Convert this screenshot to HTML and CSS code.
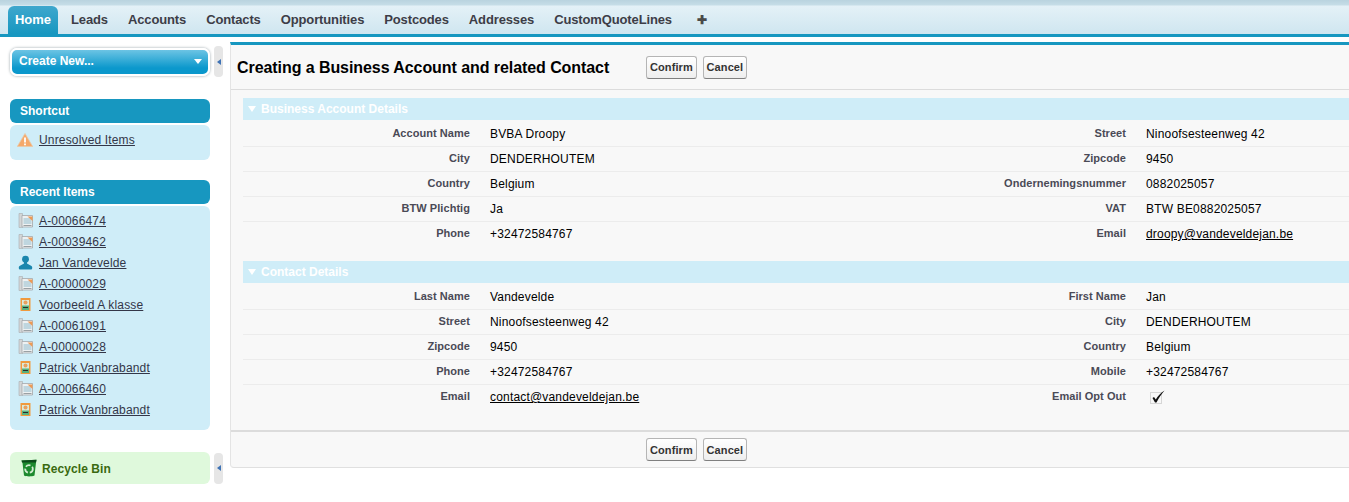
FILE: index.html
```html
<!DOCTYPE html>
<html lang="en">
<head>
<meta charset="utf-8">
<title>Creating a Business Account</title>
<link rel="stylesheet" href="styles.css">
</head>
<body>
<svg class="defs" width="0" height="0" aria-hidden="true">
  <symbol id="doc" viewBox="0 0 15 15">
    <path d="M1 .5h3.500v14H1z" fill="#d3d6d7" stroke="#a9adaf" stroke-width=".6"/>
    <path d="M4 2.500h10.500v11.500H4z" fill="#eef1f2" stroke="#a3a7a9" stroke-width=".8"/>
    <path d="M5.500 5h8v6h-8z" fill="#bfd6df"/>
    <path d="M9.500 3.500h5V8z" fill="#ee9a55"/>
    <path d="M5.500 12.500h8" stroke="#9aa0a3"/>
  </symbol>
  <symbol id="card" viewBox="0 0 15 15">
    <path d="M2.500 1h10v13h-10z" fill="#f09a3e"/>
    <path d="M4 3h7v10H4z" fill="#dcead9"/>
    <circle cx="7.500" cy="5.500" r="2" fill="#e7a05f"/>
    <path d="M4 8.500h7V13H4z" fill="#57b27f"/>
    <path d="M5 10.500h5" stroke="#2c2c2c" stroke-width="1"/>
  </symbol>
</svg>

<nav class="tabs">
  <a class="tab tab-active">Home</a>
  <a class="tab">Leads</a>
  <a class="tab">Accounts</a>
  <a class="tab">Contacts</a>
  <a class="tab">Opportunities</a>
  <a class="tab">Postcodes</a>
  <a class="tab">Addresses</a>
  <a class="tab">CustomQuoteLines</a>
  <a class="tab tab-plus">✚</a>
</nav>

<div class="page">
  <aside class="sidebar">
    <div class="side-row create-row">
      <div class="create">
        <span class="create-label">Create New...</span>
        <span class="create-arrow"></span>
      </div>
      <div class="handle"><span class="handle-arrow"></span></div>
    </div>

    <section class="module shortcut">
      <h2 class="module-head">Shortcut</h2>
      <div class="module-body">
        <div class="item item-warn">
          <svg class="icon warn" viewBox="0 0 16 14"><path d="M8 .5 15.700 13.500H.3z" fill="#f5a96b" stroke="#e8c9a8" stroke-width=".8"/><path d="M8 4.500v5" stroke="#fff" stroke-width="1.800"/><path d="M8 10.500v1.800" stroke="#fff" stroke-width="1.800"/></svg>
          <a class="link">Unresolved Items</a>
        </div>
      </div>
    </section>

    <section class="module recent">
      <h2 class="module-head">Recent Items</h2>
      <div class="module-body">
        <div class="item"><svg class="icon"><use href="#doc"/></svg><a class="link">A-00066474</a></div>
        <div class="item"><svg class="icon"><use href="#doc"/></svg><a class="link">A-00039462</a></div>
        <div class="item"><svg class="icon" viewBox="0 0 15 15"><circle cx="7.500" cy="4.200" r="3.400" fill="#1a86ad"/><path d="M6 7h3v1.500l4.500 2.500c1 .7 1 3 0 3.500h-12c-1-.5-1-2.800 0-3.500L6 8.500z" fill="#1a86ad"/></svg><a class="link">Jan Vandevelde</a></div>
        <div class="item"><svg class="icon"><use href="#doc"/></svg><a class="link">A-00000029</a></div>
        <div class="item"><svg class="icon"><use href="#card"/></svg><a class="link">Voorbeeld A klasse</a></div>
        <div class="item"><svg class="icon"><use href="#doc"/></svg><a class="link">A-00061091</a></div>
        <div class="item"><svg class="icon"><use href="#doc"/></svg><a class="link">A-00000028</a></div>
        <div class="item"><svg class="icon"><use href="#card"/></svg><a class="link">Patrick Vanbrabandt</a></div>
        <div class="item"><svg class="icon"><use href="#doc"/></svg><a class="link">A-00066460</a></div>
        <div class="item"><svg class="icon"><use href="#card"/></svg><a class="link">Patrick Vanbrabandt</a></div>
      </div>
    </section>

    <div class="side-row bin-row">
      <div class="bin">
        <svg class="bin-icon" viewBox="0 0 16 18"><path d="M.5 1.500 15.500.8l-.5 3-1.500 12.700c-3 1.200-8 1.200-10.500 0L1.500 4z" fill="#1c8a2e"/><path d="M.5 1.500 15.500.8 15 3.500H1z" fill="#0c4a1a"/><circle cx="8" cy="10" r="3.800" fill="none" stroke="#d5ecd3" stroke-width="1.800" stroke-dasharray="5 2"/></svg>
        <span class="bin-label">Recycle Bin</span>
      </div>
      <div class="handle"><span class="handle-arrow"></span></div>
    </div>
  </aside>

  <main class="panel">
    <header class="panel-head">
      <h1 class="title">Creating a Business Account and related Contact</h1>
      <div class="buttons">
        <button class="btn">Confirm</button>
        <button class="btn">Cancel</button>
      </div>
    </header>

    <div class="panel-body">
      <section class="section">
        <h3 class="section-head"><span class="tri"></span>Business Account Details</h3>
        <div class="fields">
          <div class="row"><div class="lbl">Account Name</div><div class="val">BVBA Droopy</div><div class="lbl">Street</div><div class="val">Ninoofsesteenweg 42</div></div>
          <div class="row"><div class="lbl">City</div><div class="val">DENDERHOUTEM</div><div class="lbl">Zipcode</div><div class="val">9450</div></div>
          <div class="row"><div class="lbl">Country</div><div class="val">Belgium</div><div class="lbl">Ondernemingsnummer</div><div class="val">0882025057</div></div>
          <div class="row"><div class="lbl">BTW Plichtig</div><div class="val">Ja</div><div class="lbl">VAT</div><div class="val">BTW BE0882025057</div></div>
          <div class="row"><div class="lbl">Phone</div><div class="val">+32472584767</div><div class="lbl">Email</div><div class="val"><a class="mail">droopy@vandeveldejan.be</a></div></div>
        </div>
      </section>

      <section class="section">
        <h3 class="section-head"><span class="tri"></span>Contact Details</h3>
        <div class="fields">
          <div class="row"><div class="lbl">Last Name</div><div class="val">Vandevelde</div><div class="lbl">First Name</div><div class="val">Jan</div></div>
          <div class="row"><div class="lbl">Street</div><div class="val">Ninoofsesteenweg 42</div><div class="lbl">City</div><div class="val">DENDERHOUTEM</div></div>
          <div class="row"><div class="lbl">Zipcode</div><div class="val">9450</div><div class="lbl">Country</div><div class="val">Belgium</div></div>
          <div class="row"><div class="lbl">Phone</div><div class="val">+32472584767</div><div class="lbl">Mobile</div><div class="val">+32472584767</div></div>
          <div class="row"><div class="lbl">Email</div><div class="val"><a class="mail">contact@vandeveldejan.be</a></div><div class="lbl">Email Opt Out</div><div class="val">
            <svg class="check" viewBox="0 0 15 14"><rect x=".5" y="2.500" width="11" height="11" fill="none" stroke="#b5b5b5" stroke-dasharray="1 1"/><path d="M2.500 8 4 7l1.800 2.600C7.800 6 10.500 3 14.500.5 11.500 4 9 7.500 6.500 12.500H5z" fill="#111"/></svg>
          </div></div>
        </div>
      </section>
    </div>

    <footer class="panel-foot">
      <button class="btn">Confirm</button>
      <button class="btn">Cancel</button>
    </footer>
  </main>
</div>
</body>
</html>
```

FILE: styles.css
```css
* { box-sizing: border-box; }

html, body {
  margin: 0;
  height: 502px;
  overflow: hidden;
  background: #fff;
  font-family: "Liberation Sans", Arial, sans-serif;
  font-size: 12px;
  color: #222;
}

.defs { display: block; height: 0; }

/* top tabs */
.tabs {
  display: flex;
  align-items: flex-end;
  height: 37px;
  padding-left: 8px;
  border-bottom: 3px solid #1797c0;
  background: linear-gradient(#b9d3df 0, #c6dde7 5px, #e4f1f7 6px, #cfe6f0 100%);
}

.tab {
  display: block;
  height: 28px;
  padding: 0 10px;
  font-size: 13px;
  font-weight: bold;
  line-height: 27px;
  letter-spacing: -.13px;
  color: #3d3d47;
}

.tab-active {
  width: 50px;
  padding: 0;
  margin-right: 3px;
  text-align: center;
  letter-spacing: 0;
  color: #fff;
  border-radius: 6px 6px 0 0;
  background: linear-gradient(#3fa7cd, #1797c0);
}

.tab-plus {
  margin-left: 5px;
  font-size: 12px;
  line-height: 28px;
  color: #4a4a4a;
}

/* page */
.page {
  display: flex;
  align-items: flex-start;
}

.sidebar {
  flex: none;
  width: 213px;
  margin-left: 10px;
}

.side-row {
  display: flex;
  gap: 4px;
  align-items: center;
}

.create-row { margin-top: 9px; }

.create {
  display: flex;
  align-items: center;
  justify-content: space-between;
  width: 200px;
  height: 28px;
  padding: 0 6px 0 7px;
  border: 2px solid #fff;
  border-radius: 7px;
  box-shadow: 0 0 3px #9aa5aa;
  background: linear-gradient(#6cc4e4, #0b98cc 75%);
  font-size: 12px;
  font-weight: bold;
  color: #fff;
}

.create-label { padding-bottom: 2px; }

.create-arrow {
  width: 0;
  height: 0;
  border-left: 4px solid transparent;
  border-right: 4px solid transparent;
  border-top: 5px solid #fff;
}

.handle {
  display: flex;
  align-items: center;
  justify-content: center;
  flex: none;
  width: 9px;
  height: 31px;
  border-radius: 4px;
  background: #e6e6e6;
}

.handle-arrow {
  width: 0;
  height: 0;
  border-top: 3px solid transparent;
  border-bottom: 3px solid transparent;
  border-right: 4px solid #3f73b5;
}

.module { width: 200px; }
.shortcut { margin-top: 22px; }
.recent { margin-top: 20px; }

.module-head {
  height: 24px;
  margin: 0 0 2px;
  padding-left: 10px;
  border-radius: 6px;
  background: #1797c0;
  font-size: 12px;
  font-weight: bold;
  line-height: 24px;
  color: #fff;
}

.module-body {
  border-radius: 6px;
  background: #cfedf8;
}

.shortcut .module-body { height: 35px; padding-top: 4px; }
.recent .module-body { height: 224px; padding-top: 4px; }

.item {
  display: flex;
  align-items: center;
  height: 21px;
  padding-left: 8px;
}

.item-warn { padding-left: 7px; }

.icon {
  flex: none;
  width: 15px;
  height: 15px;
  margin-right: 6px;
}

.warn { width: 16px; height: 14px; }

.link {
  font-size: 12px;
  letter-spacing: .16px;
  color: #333648;
  text-decoration: underline;
}

.bin-row { margin-top: 22px; }

.bin {
  display: flex;
  align-items: center;
  width: 200px;
  height: 32px;
  padding-left: 11px;
  border-radius: 6px;
  background: #dff9dc;
}

.bin-icon { width: 16px; height: 18px; margin-right: 5px; }

.bin-label {
  padding-top: 2px;
  font-size: 12px;
  font-weight: bold;
  letter-spacing: .08px;
  color: #3a6a10;
}

/* main panel */
.panel {
  flex: 1;
  height: 426px;
  margin: 5px 0 0 7px;
  border-top: 3px solid #1797c0;
  border-left: 1px solid #e4e4e4;
  border-bottom: 1px solid #e0e0e0;
  border-radius: 0 0 0 4px;
  background: #f8f8f8;
}

.panel-head {
  display: flex;
  align-items: center;
  height: 45px;
  padding-left: 6px;
  border-bottom: 1px solid #dcdcdc;
}

.title {
  width: 409px;
  margin: 0;
  padding-top: 2px;
  font-size: 16px;
  font-weight: bold;
  letter-spacing: -.07px;
  color: #000;
}

.buttons { display: flex; gap: 6px; }

.btn {
  height: 23px;
  padding: 0 3px;
  border: 1px solid #b5b5b5;
  border-bottom-color: #7f7f7f;
  border-radius: 3px;
  background: linear-gradient(#fff, #eee);
  font-family: "Liberation Sans", Arial, sans-serif;
  font-size: 11px;
  font-weight: bold;
  letter-spacing: .1px;
  color: #333;
}

.btn + .btn { padding: 0 2.7px; }

.panel-body {
  height: 342px;
  padding: 8px 0 0 12px;
  border-bottom: 2px solid #dcdcdc;
}

.section { margin-bottom: 14px; }

.section-head {
  height: 22px;
  margin: 0;
  padding-left: 5px;
  display: flex;
  align-items: center;
  background: #cfedf8;
  font-size: 12px;
  font-weight: bold;
  color: #fff;
}

.tri {
  width: 0;
  height: 0;
  margin-right: 5px;
  border-left: 4px solid transparent;
  border-right: 4px solid transparent;
  border-top: 6px solid #fff;
}

.fields { padding-top: 2px; }

.row {
  display: grid;
  grid-template-columns: 227px 430px 226px 1fr;
  height: 25px;
  border-bottom: 1px solid #ececec;
  line-height: 24px;
}

.row:last-child { border-bottom: 0; }

.lbl {
  font-size: 11px;
  font-weight: bold;
  letter-spacing: .05px;
  text-align: right;
  color: #4a4a56;
  line-height: 23px;
}

.val {
  padding-left: 20px;
  font-size: 12px;
  letter-spacing: .18px;
  color: #000;
}

.mail { color: #000; text-decoration: underline; }

.check { display: block; width: 15px; height: 14px; margin: 5px 0 0 4px; }

.panel-foot {
  display: flex;
  gap: 6px;
  height: 35px;
  padding: 6px 0 0 415px;
}
```
